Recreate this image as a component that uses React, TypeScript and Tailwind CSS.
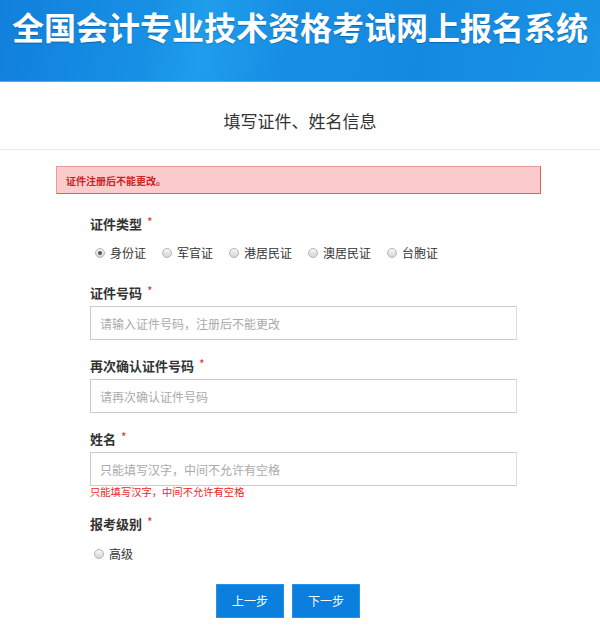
import React from "react";

const font = { fontFamily: '"Noto Sans CJK SC", "Noto Sans", sans-serif' };

function Radio({ checked, label }: { checked?: boolean; label: string }) {
  return (
    <div className="flex items-center">
      <span className="w-[10px] h-[10px] rounded-full border border-[#b4b4b4] bg-[linear-gradient(180deg,#f6f6f6_0%,#d6d6d6_100%)] flex items-center justify-center">
        {checked && <span className="w-[4px] h-[4px] rounded-full bg-[#555]" />}
      </span>
      <span className="ml-[5px] text-[12px] leading-[18px] text-[#333]">{label}</span>
    </div>
  );
}

function Label({ text }: { text: string }) {
  return (
    <div className="flex items-start h-[20px]">
      <span className="text-[13px] leading-[20px] font-bold text-[#333]">{text}</span>
      <span className="ml-[5px] text-[12px] leading-[16px] text-[#e53333]">*</span>
    </div>
  );
}

function Input({ placeholder }: { placeholder: string }) {
  return (
    <input
      className="mt-[3px] block w-[427px] h-[34px] border border-[#cccccc] border-r-[#dedede] pl-[9px] text-[12px] text-[#333] placeholder:text-[#aaaaaa] outline-none bg-white"
      style={font}
      placeholder={placeholder}
    />
  );
}

export default function App() {
  return (
    <div className="w-[600px] h-[628px] bg-white overflow-hidden" style={font}>
      <div className="h-[82px] border-b border-[#52aef0] bg-[linear-gradient(100deg,#1180dc_0%,#1790e4_25%,#1f9deb_34%,#178ee4_48%,#1489e0_70%,#1993e6_100%)]">
        <div className="pt-[6px] text-center text-[32px] leading-[40px] font-bold text-white [text-shadow:0_1px_1px_rgba(0,40,90,0.35)] whitespace-nowrap">
          全国会计专业技术资格考试网上报名系统
        </div>
      </div>

      <div className="pt-[28px] pb-[17px] border-b border-[#e8e8e8] text-center text-[17px] leading-[22px] text-[#333]">
        填写证件、姓名信息
      </div>

      <div className="mt-[16px] ml-[56px] w-[485px] h-[28px] border border-[#ee9999] border-b-[#e25c5c] border-r-[#e25c5c] bg-[#fccccc] flex items-center pl-[9px]">
        <span className="text-[10px] font-bold text-[#cc2222]">证件注册后不能更改。</span>
      </div>

      <div className="ml-[90px] w-[427px]">
        <div className="mt-[20px]">
          <Label text="证件类型" />
        </div>
        <div className="mt-[10px] ml-[5px] flex gap-[16px]">
          <Radio checked label="身份证" />
          <Radio label="军官证" />
          <Radio label="港居民证" />
          <Radio label="澳居民证" />
          <Radio label="台胞证" />
        </div>

        <div className="mt-[21px]">
          <Label text="证件号码" />
        </div>
        <Input placeholder="请输入证件号码，注册后不能更改" />

        <div className="mt-[16px]">
          <Label text="再次确认证件号码" />
        </div>
        <Input placeholder="请再次确认证件号码" />

        <div className="mt-[16px]">
          <Label text="姓名" />
        </div>
        <Input placeholder="只能填写汉字，中间不允许有空格" />
        <div className="text-[10.3px] leading-[12px] text-[#ee1c25]">只能填写汉字，中间不允许有空格</div>

        <div className="mt-[16px]">
          <Label text="报考级别" />
        </div>
        <div className="mt-[11px] ml-[4px] flex">
          <Radio label="高级" />
        </div>
      </div>

      <div className="mt-[21px] ml-[216px] flex gap-[8px]">
        <button className="w-[68px] h-[34px] bg-[#0a7fdd] border border-[#2a92e6] text-white text-[12px]" style={font}>
          上一步
        </button>
        <button className="w-[68px] h-[34px] bg-[#0a7fdd] border border-[#2a92e6] text-white text-[12px]" style={font}>
          下一步
        </button>
      </div>
    </div>
  );
}
